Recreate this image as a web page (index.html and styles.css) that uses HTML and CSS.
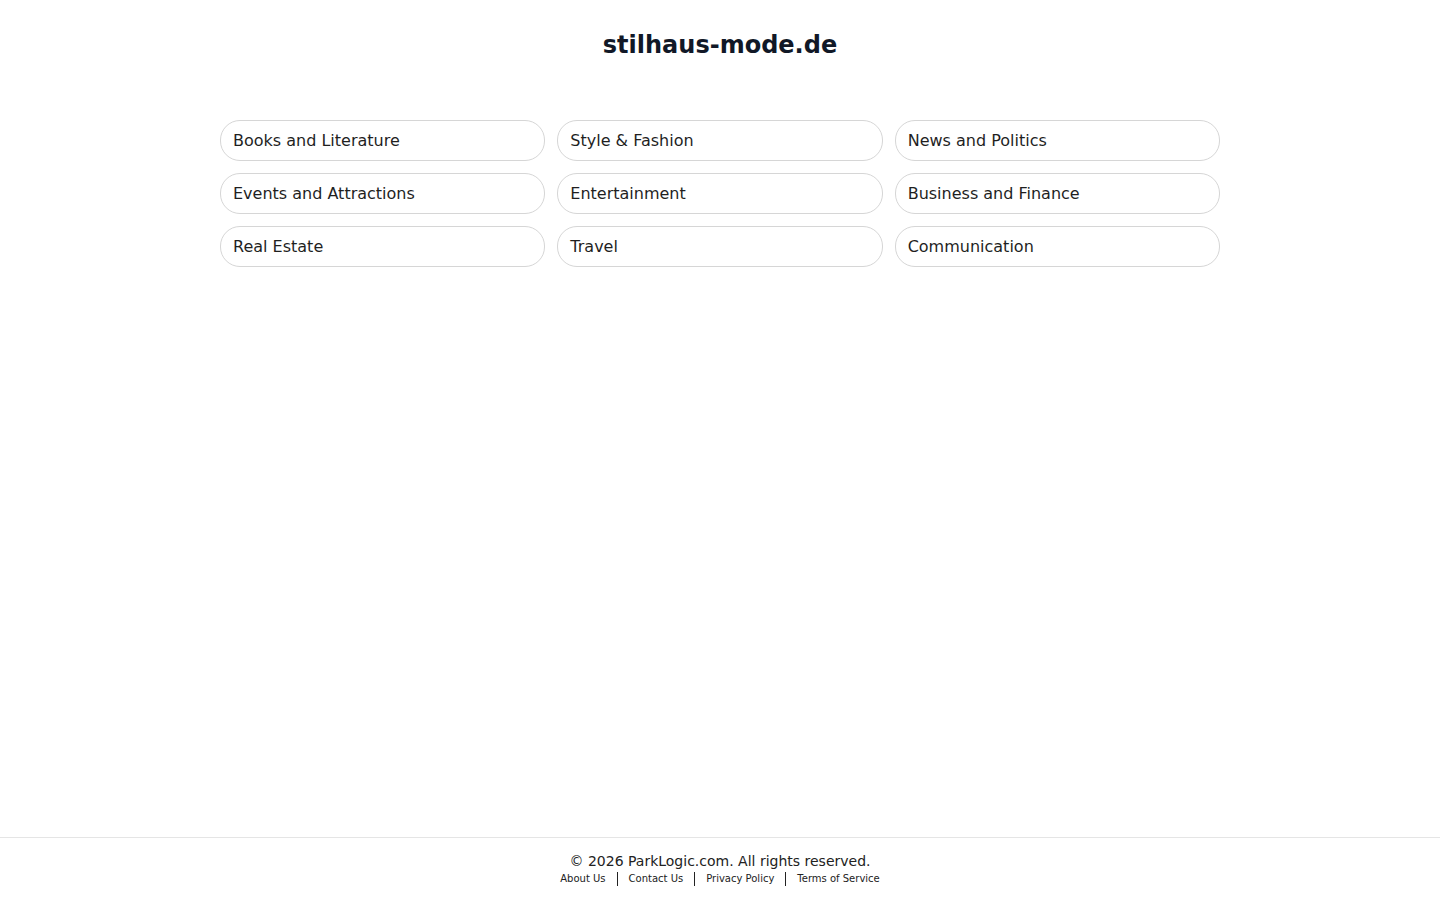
FILE: index.html
```html
<!DOCTYPE html>
<html lang="en">
<head>
    <meta charset="UTF-8">
    <title>stilhaus-mode.de</title>
    <link rel="stylesheet" href="styles.css">
</head>
<body>
    <div class="page">
        <main class="content">
            <h1 class="domain">stilhaus-mode.de</h1>

            <div class="links">
                <a class="link-item" href="#">Books and Literature</a>
                <a class="link-item" href="#">Style &amp; Fashion</a>
                <a class="link-item" href="#">News and Politics</a>
                <a class="link-item" href="#">Events and Attractions</a>
                <a class="link-item" href="#">Entertainment</a>
                <a class="link-item" href="#">Business and Finance</a>
                <a class="link-item" href="#">Real Estate</a>
                <a class="link-item" href="#">Travel</a>
                <a class="link-item" href="#">Communication</a>
            </div>
        </main>

        <footer class="footer">
            <p class="copyright">&copy; 2026 ParkLogic.com. All rights reserved.</p>
            <div class="footer-links">
                <a href="#">About Us</a>
                <span class="sep"></span>
                <a href="#">Contact Us</a>
                <span class="sep"></span>
                <a href="#">Privacy Policy</a>
                <span class="sep"></span>
                <a href="#">Terms of Service</a>
            </div>
        </footer>
    </div>
</body>
</html>
```

FILE: styles.css
```css
body {
    font-family: "DejaVu Sans", Verdana, sans-serif;
    background-color: #ffffff;
    color: #1f1f1f;
    margin: 0;
    padding: 0;
}
.page {
    min-height: 100vh;
    display: flex;
    flex-direction: column;
}
.content {
    flex: 1;
    width: 1000px;
    margin: 0 auto;
}
.domain {
    text-align: center;
    font-size: 24px;
    line-height: 32px;
    font-weight: bold;
    color: #111827;
    margin: 29px 0 59px;
}
.links {
    display: grid;
    grid-template-columns: repeat(3, 1fr);
    column-gap: 12px;
    row-gap: 12px;
}
.link-item {
    display: block;
    height: 41px;
    line-height: 39px;
    box-sizing: border-box;
    padding: 0 12px;
    border: 1px solid #d6d6d6;
    border-radius: 20px;
    font-size: 16px;
    color: #1f1f1f;
    text-decoration: none;
}
.link-item:hover {
    background-color: #f5f5f5;
}
.footer {
    border-top: 1px solid #e5e5e5;
    padding: 14px 0 14px;
    text-align: center;
}
.copyright {
    margin: 0;
    font-size: 14px;
    line-height: 18px;
    color: #222222;
}
.footer-links {
    display: flex;
    justify-content: center;
    align-items: center;
    gap: 11px;
    margin-top: 2px;
}
.footer-links a {
    font-size: 10px;
    line-height: 14px;
    color: #222222;
    text-decoration: none;
}
.sep {
    width: 1px;
    height: 14px;
    background-color: #222222;
}
```
